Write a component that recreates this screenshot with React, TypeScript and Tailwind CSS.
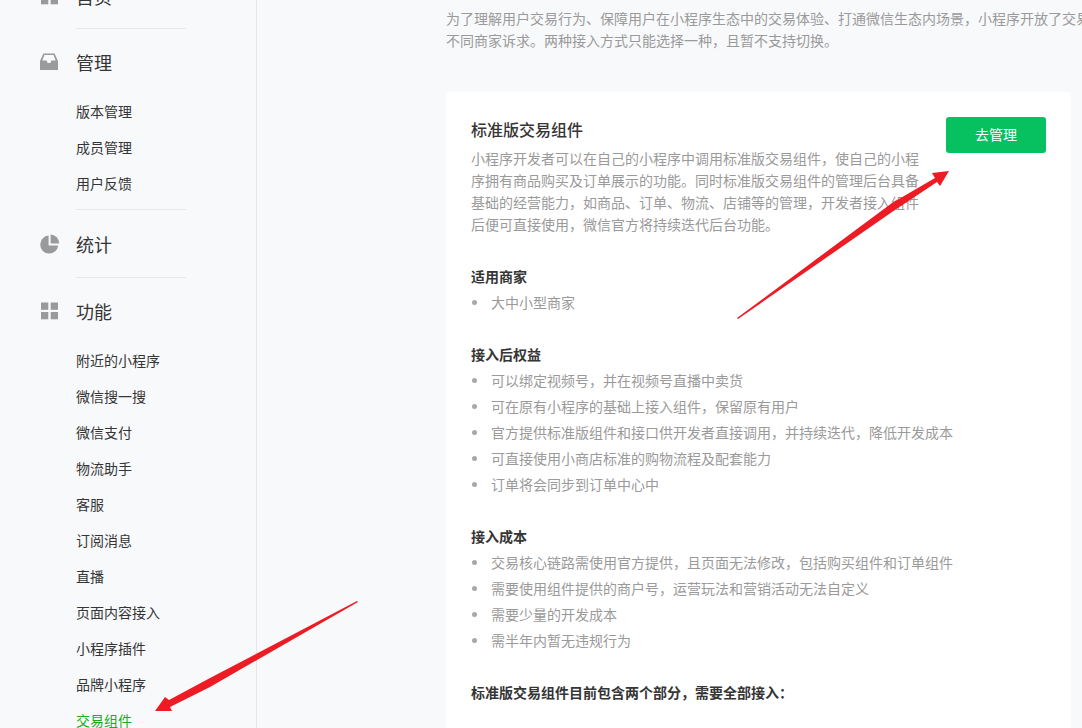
import React from 'react'

const fontStack = '[font-family:"Noto_Sans_CJK_SC","Liberation_Sans",sans-serif]'

type NavGroup = {
  title: string
  icon: React.ReactNode
  items?: string[]
  active?: string
}

function GridIcon() {
  return (
    <svg width="18" height="18" viewBox="0 0 18 18" fill="#9a9a9a">
      <rect x="1" y="0.5" width="7.3" height="7.3" />
      <rect x="10.7" y="0.5" width="7.3" height="7.3" />
      <rect x="1" y="10" width="7.3" height="7.3" />
      <rect x="10.7" y="10" width="7.3" height="7.3" />
    </svg>
  )
}

function InboxIcon() {
  return (
    <svg width="18" height="18" viewBox="0 0 18 18" fill="#9a9a9a">
      <path d="M3.4 0.5h11.2L18 8v9H0V8L3.4 0.5zm1 1.6L2.4 7.6h4.2l1 2.4h2.8l1-2.4h4.2l-2-5.5H4.4z" fillRule="evenodd" />
    </svg>
  )
}

function PieIcon() {
  return (
    <svg width="20" height="20" viewBox="0 0 20 20" fill="#9a9a9a">
      <path d="M8.6 1.6v9.8h9.6A9 9 0 1 1 8.6 1.6z" />
      <path d="M10.6 0.6a9 9 0 0 1 8.6 8.8h-8.6V0.6z" />
    </svg>
  )
}

const groups: NavGroup[] = [
  { title: '首页', icon: <GridIcon /> },
  { title: '管理', icon: <InboxIcon />, items: ['版本管理', '成员管理', '用户反馈'] },
  { title: '统计', icon: <PieIcon /> },
  {
    title: '功能',
    icon: <GridIcon />,
    active: '交易组件',
    items: [
      '附近的小程序',
      '微信搜一搜',
      '微信支付',
      '物流助手',
      '客服',
      '订阅消息',
      '直播',
      '页面内容接入',
      '小程序插件',
      '品牌小程序',
      '交易组件',
    ],
  },
]

function Sidebar() {
  return (
    <aside className="-mt-[22px] w-[257px] shrink-0 border-r border-[#e7e7eb] pl-[40px]">
      {groups.map((group, index) => (
        <div key={group.title}>
          <div className="flex h-[36px] items-center">
            <span className="flex w-[36px] items-center">{group.icon}</span>
            <span className="text-[18px] text-[#353535]">{group.title}</span>
          </div>
          {group.items && (
            <ul className="mt-[13px] pl-[36px]">
              {group.items.map((item) => (
                <li
                  key={item}
                  className={`flex h-[36px] items-center text-[14px] ${
                    item === group.active ? 'text-[#1aad19]' : 'text-[#353535]'
                  }`}
                >
                  {item}
                </li>
              ))}
            </ul>
          )}
          {index < groups.length - 1 && (
            <div
              className={`ml-[36px] h-px w-[110px] bg-[#e7e7eb] ${
                index === 0 ? 'mt-[14px] mb-[15px]' : index === 1 ? 'mt-[8px] mb-[16px]' : 'mt-[15px] mb-[15px]'
              }`}
            />
          )}
        </div>
      ))}
    </aside>
  )
}

function Section({ title, items }: { title: string; items: string[] }) {
  return (
    <div className="mb-[26px]">
      <h4 className="text-[14px] leading-[26px] font-bold text-[#353535]">{title}</h4>
      <ul>
        {items.map((item) => (
          <li key={item} className="flex items-center text-[14px] leading-[26px] text-[#9a9a9a]">
            <span className="mr-[14px] ml-[1px] h-[5px] w-[5px] rounded-full bg-[#a8a8a8]" />
            {item}
          </li>
        ))}
      </ul>
    </div>
  )
}

function TradeCard() {
  return (
    <section className="mt-[41px] w-[625px] rounded-[4px] bg-white pt-[25px] pr-[25px] pb-[40px] pl-[25px]">
      <div className="flex items-start justify-between">
        <div className="w-[448px]">
          <h3 className="text-[16px] leading-[24px] font-medium text-[#353535]">标准版交易组件</h3>
          <p className="mt-[6px] text-[14px] leading-[22px] text-[#9a9a9a]">
            小程序开发者可以在自己的小程序中调用标准版交易组件，使自己的小程序拥有商品购买及订单展示的功能。同时标准版交易组件的管理后台具备基础的经营能力，如商品、订单、物流、店铺等的管理，开发者接入组件后便可直接使用，微信官方将持续迭代后台功能。
          </p>
        </div>
        <button className="h-[36px] w-[100px] rounded-[3px] bg-[#07c160] pb-[2px] text-[14px] text-white">去管理</button>
      </div>
      <div className="mt-[28px]">
        <Section title="适用商家" items={['大中小型商家']} />
        <Section
          title="接入后权益"
          items={[
            '可以绑定视频号，并在视频号直播中卖货',
            '可在原有小程序的基础上接入组件，保留原有用户',
            '官方提供标准版组件和接口供开发者直接调用，并持续迭代，降低开发成本',
            '可直接使用小商店标准的购物流程及配套能力',
            '订单将会同步到订单中心中',
          ]}
        />
        <Section
          title="接入成本"
          items={[
            '交易核心链路需使用官方提供，且页面无法修改，包括购买组件和订单组件',
            '需要使用组件提供的商户号，运营玩法和营销活动无法自定义',
            '需要少量的开发成本',
            '需半年内暂无违规行为',
          ]}
        />
        <h4 className="text-[14px] leading-[26px] font-bold text-[#353535]">标准版交易组件目前包含两个部分，需要全部接入：</h4>
      </div>
    </section>
  )
}

export default function App() {
  return (
    <div className={`relative flex h-[728px] w-[1082px] overflow-hidden bg-[#f8f9fb] ${fontStack}`}>
      <Sidebar />
      <main className="ml-[189px] min-w-0 flex-1 pt-[7px]">
        <p className="text-[14px] leading-[22px] whitespace-nowrap text-[#9a9a9a]">
          为了理解用户交易行为、保障用户在小程序生态中的交易体验、打通微信生态内场景，小程序开放了交易组件
        </p>
        <p className="text-[14px] leading-[22px] whitespace-nowrap text-[#9a9a9a]">
          不同商家诉求。两种接入方式只能选择一种，且暂不支持切换。
        </p>
        <TradeCard />
      </main>
      {/* red annotation arrows drawn over the page */}
      <svg className="absolute top-0 left-0" width="1082" height="728" fill="#ed1c24">
        <polygon points="737,318 892,203 935,178 932,173 949,171 940,186 937,182 892,212 738,319" />
        <polygon points="357,601 210,678 169,700 165,697 155,711 172,711 170,707 210,687 358,602" />
      </svg>
    </div>
  )
}
